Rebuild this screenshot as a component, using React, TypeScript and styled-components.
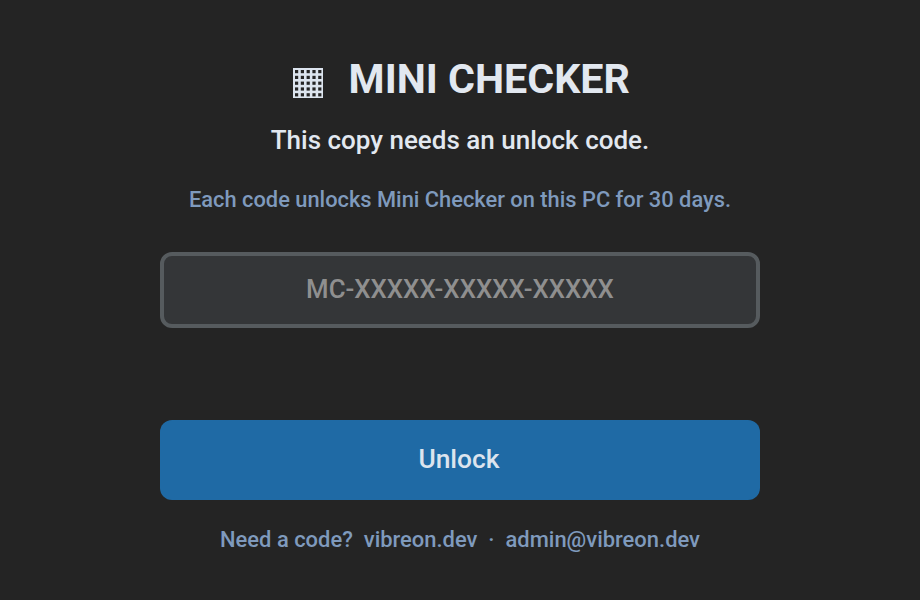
import React from "react";
import styled, { createGlobalStyle } from "styled-components";

const Global = createGlobalStyle`
  html, body { margin: 0; padding: 0; background: #242424; }
  body { font-family: Roboto, "Liberation Sans", sans-serif; }
`;

const Page = styled.main`
  width: 920px;
  height: 600px;
  box-sizing: border-box;
  padding-top: 50px;
  display: flex;
  flex-direction: column;
  align-items: center;
  background: #242424;
`;

const TitleRow = styled.div`
  height: 58px;
  margin-left: 3px;
  display: flex;
  align-items: center;
  justify-content: center;
  gap: 25.5px;
`;

const GridIcon = styled.svg`
  width: 30px;
  height: 30px;
  margin-top: 7px;
  display: block;
`;

const Title = styled.h1`
  margin: 0;
  font-size: 41.2px;
  font-weight: 700;
  color: #e2e8f0;
`;

const Subtitle = styled.p`
  margin: 10px 0 0;
  font-size: 26px;
  line-height: 44px;
  font-weight: 500;
  color: #e2e8f0;
`;

const Note = styled.p`
  margin: 23px 0 0;
  font-size: 21.85px;
  line-height: 30px;
  font-weight: 500;
  color: #7f9abd;
`;

const CodeInput = styled.input`
  box-sizing: border-box;
  width: 600px;
  height: 76px;
  margin-top: 37px;
  padding: 0 0 2px;
  background: #343638;
  border: 4px solid #565b5e;
  border-radius: 12px;
  text-align: center;
  font-family: inherit;
  font-size: 25.8px;
  font-weight: 500;
  color: #dce4ee;
  outline: none;
  &::placeholder { color: #8f8f8f; opacity: 1; }
`;

const Unlock = styled.button`
  width: 600px;
  height: 80px;
  margin-top: 92px;
  padding: 0 2px 2px 0;
  border: 0;
  border-radius: 12px;
  background: #1f6aa5;
  color: #dce4ee;
  font-family: inherit;
  font-size: 26.4px;
  font-weight: 500;
`;

const Footer = styled.p`
  margin: 25px 0 0;
  font-size: 21.95px;
  line-height: 30px;
  font-weight: 500;
  color: #7f9abd;
  white-space: pre;
`;

const cells = [0, 1, 2, 3, 4];

export default function App() {
  return (
    <Page>
      <Global />
      <TitleRow>
        <GridIcon viewBox="0 0 30 30" aria-hidden="true">
          <rect x="0" y="0" width="30" height="30" fill="#dce4ee" />
          {cells.flatMap((r) =>
            cells.map((c) => (
              <rect key={`${r}-${c}`} x={2 + c * 5.8} y={2 + r * 5.8} width="3.2" height="3.2" fill="#242424" />
            ))
          )}
        </GridIcon>
        <Title>MINI CHECKER</Title>
      </TitleRow>
      <Subtitle>This copy needs an unlock code.</Subtitle>
      <Note>Each code unlocks Mini Checker on this PC for 30 days.</Note>
      <CodeInput placeholder="MC-XXXXX-XXXXX-XXXXX" />
      <Unlock>Unlock</Unlock>
      <Footer>{"Need a code?  vibreon.dev  ·  admin@vibreon.dev"}</Footer>
    </Page>
  );
}
